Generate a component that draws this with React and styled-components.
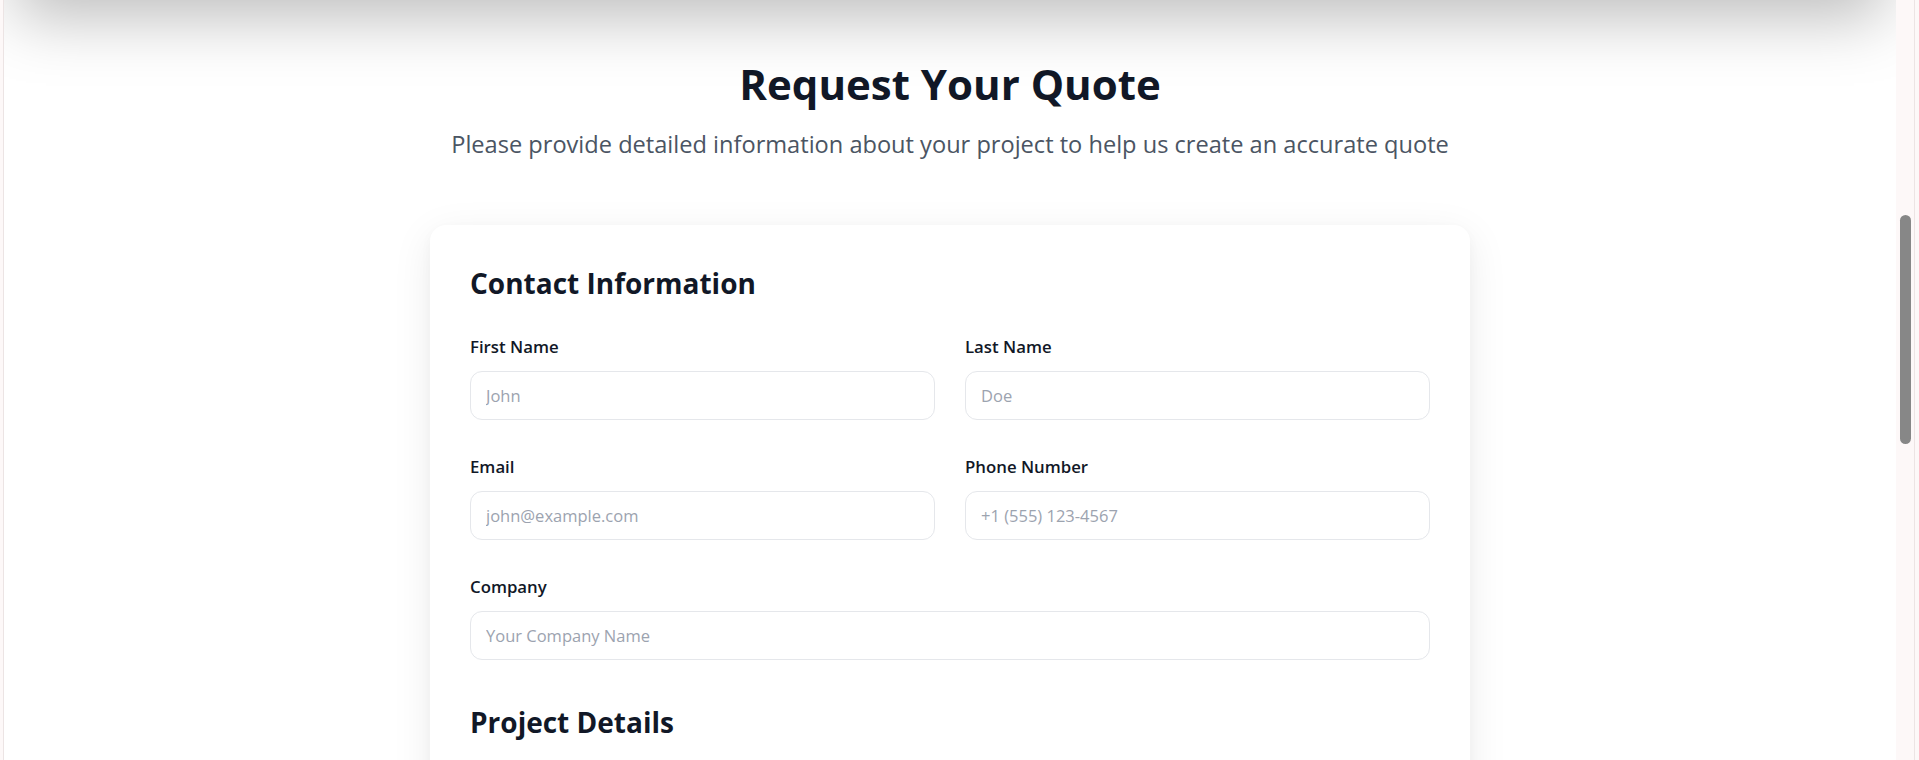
import React, { useLayoutEffect, useRef, useState } from 'react';
import styled, { createGlobalStyle } from 'styled-components';
import { FiChevronDown } from 'react-icons/fi';

const GlobalStyle = createGlobalStyle`
  html, body {
    margin: 0;
    padding: 0;
    background: #fdf8f8;
    font-family: "Open Sans", "Noto Sans", Arial, sans-serif;
    overflow: hidden;
  }
  * { box-sizing: border-box; }
`;

// Preview frame: scrolling viewport plus its scrollbar column
const Frame = styled.div`
  display: flex;
  height: 760px;
  margin: 0 4px 0 3px;
  border-left: 1px solid #ece4e4;
  border-right: 1px solid #ece4e4;
`;

const Viewport = styled.div`
  flex: 1;
  min-width: 0;
  background: #ffffff;
  overflow-y: scroll;
  scrollbar-width: none;

  &::-webkit-scrollbar {
    display: none;
  }
`;

const Track = styled.div`
  width: 18px;
  flex-shrink: 0;
  background: #fdf8f8;
`;

const Thumb = styled.div`
  width: 11px;
  margin-left: 4px;
  border-radius: 6px;
  background: #878787;
`;

// Hero sits above the form, scrolled out of view
const Hero = styled.section`
  position: relative;
  z-index: 1;
  height: 717px;
  display: flex;
  flex-direction: column;
  align-items: center;
  justify-content: center;
  gap: 20px;
  background: linear-gradient(135deg, #1e3a8a 0%, #2563eb 100%);
  color: #fff;
  box-shadow: 0 30px 60px -12px rgba(0, 0, 0, 0.26);
`;

const HeroTitle = styled.h1`
  margin: 0;
  font-size: 56px;
  font-weight: 800;
`;

const HeroText = styled.p`
  margin: 0;
  font-size: 20px;
  color: #dbeafe;
`;

const QuoteSection = styled.section`
  padding: 60px 0 112px;
`;

const Intro = styled.header`
  text-align: center;
  margin-bottom: 65px;
`;

const Title = styled.h2`
  margin: 0;
  font-size: 42px;
  line-height: 48px;
  font-weight: 700;
  color: #111827;
`;

const Subtitle = styled.p`
  margin: 20px 0 0;
  font-size: 23.6px;
  line-height: 32px;
  color: #4b5563;
`;

const Card = styled.form`
  width: 1040px;
  margin: 0 auto;
  padding: 40px;
  background: #ffffff;
  border-radius: 16px;
  box-shadow: 0 10px 40px rgba(0, 0, 0, 0.08), 0 4px 12px rgba(0, 0, 0, 0.03);
`;

const Block = styled.div`
  & + & {
    margin-top: 44px;
  }
`;

const BlockTitle = styled.h3`
  margin: 0 0 34px;
  font-size: 28px;
  line-height: 36px;
  font-weight: 700;
  color: #111827;
`;

const Grid = styled.div`
  display: grid;
  grid-template-columns: 1fr 1fr;
  column-gap: 30px;
  row-gap: 35px;
`;

const Field = styled.div`
  display: flex;
  flex-direction: column;
  grid-column: ${({ $wide }) => ($wide ? '1 / -1' : 'auto')};
`;

const Label = styled.label`
  font-size: 16.8px;
  line-height: 24px;
  font-weight: 600;
  color: #111827;
  margin-bottom: 12px;
`;

const Input = styled.input`
  height: 49px;
  padding: 0 15px;
  border: 1px solid #e5e7eb;
  border-radius: 12px;
  background: #fff;
  font-family: inherit;
  font-size: 16.5px;
  color: #111827;
  outline: none;

  &::placeholder {
    color: #9ca3af;
  }
`;

const SelectWrap = styled.div`
  position: relative;
  display: flex;

  svg {
    position: absolute;
    right: 16px;
    top: 16px;
    color: #6b7280;
    pointer-events: none;
  }
`;

const Select = styled.select`
  flex: 1;
  height: 49px;
  padding: 0 15px;
  border: 1px solid #e5e7eb;
  border-radius: 12px;
  background: #fff;
  font-family: inherit;
  font-size: 16.5px;
  color: #9ca3af;
  appearance: none;
`;

const TextArea = styled.textarea`
  height: ${({ $rows }) => $rows * 24 + 26}px;
  padding: 12px 15px;
  border: 1px solid #e5e7eb;
  border-radius: 12px;
  font-family: inherit;
  font-size: 16.5px;
  line-height: 24px;
  resize: vertical;

  &::placeholder {
    color: #9ca3af;
  }
`;

const SubmitRow = styled.div`
  display: flex;
  justify-content: flex-end;
  margin-top: 40px;
`;

const SubmitButton = styled.button`
  height: 56px;
  padding: 0 32px;
  border: none;
  border-radius: 12px;
  background: #2563eb;
  color: #fff;
  font-family: inherit;
  font-size: 17px;
  font-weight: 600;
`;

function TextField({ label, placeholder, type = 'text', wide }) {
  return (
    <Field $wide={wide}>
      <Label>{label}</Label>
      <Input type={type} placeholder={placeholder} />
    </Field>
  );
}

function SelectField({ label, options, wide }) {
  return (
    <Field $wide={wide}>
      <Label>{label}</Label>
      <SelectWrap>
        <Select defaultValue="">
          {options.map((o, i) => (
            <option key={o} value={i === 0 ? '' : o}>{o}</option>
          ))}
        </Select>
        <FiChevronDown size={18} />
      </SelectWrap>
    </Field>
  );
}

export default function App() {
  const viewRef = useRef(null);
  const heroRef = useRef(null);
  const [thumb, setThumb] = useState({ top: 0, height: 0 });

  const syncThumb = () => {
    const v = viewRef.current;
    if (!v) return;
    const h = v.clientHeight;
    const size = (h * h) / v.scrollHeight;
    const range = v.scrollHeight - h;
    const top = range > 0 ? (v.scrollTop / range) * (h - size) : 0;
    setThumb({ top, height: size });
  };

  // open the page scrolled to the form, just below the hero
  useLayoutEffect(() => {
    if (viewRef.current && heroRef.current) {
      viewRef.current.scrollTop = heroRef.current.offsetHeight;
    }
    syncThumb();
  }, []);

  return (
    <>
      <GlobalStyle />
      <Frame>
        <Viewport ref={viewRef} onScroll={syncThumb}>
          <Hero ref={heroRef}>
            <HeroTitle>Get a Custom Quote</HeroTitle>
            <HeroText>Tell us about your project and we'll get back to you within 24 hours</HeroText>
          </Hero>

          <QuoteSection>
            <Intro>
              <Title>Request Your Quote</Title>
              <Subtitle>
                Please provide detailed information about your project to help us create an accurate quote
              </Subtitle>
            </Intro>

            <Card onSubmit={(e) => e.preventDefault()}>
              <Block>
                <BlockTitle>Contact Information</BlockTitle>
                <Grid>
                  <TextField label="First Name" placeholder="John" />
                  <TextField label="Last Name" placeholder="Doe" />
                  <TextField label="Email" type="email" placeholder="john@example.com" />
                  <TextField label="Phone Number" type="tel" placeholder="+1 (555) 123-4567" />
                  <TextField label="Company" placeholder="Your Company Name" wide />
                </Grid>
              </Block>

              <Block>
                <BlockTitle>Project Details</BlockTitle>
                <Grid>
                  <SelectField
                    label="Project Type"
                    options={['Select project type', 'Website', 'Mobile App', 'E-commerce', 'Branding']}
                  />
                  <SelectField
                    label="Budget Range"
                    options={['Select budget range', '$5k - $10k', '$10k - $25k', '$25k - $50k', '$50k+']}
                  />
                  <SelectField
                    label="Timeline"
                    options={['Select timeline', '1-2 months', '3-4 months', '5-6 months', 'Flexible']}
                  />
                  <TextField label="Desired Start Date" placeholder="mm/dd/yyyy" />
                  <Field $wide>
                    <Label>Project Description</Label>
                    <TextArea $rows={5} placeholder="Describe your project goals, features and any specific requirements" />
                  </Field>
                </Grid>
              </Block>

              <Block>
                <BlockTitle>Additional Information</BlockTitle>
                <Grid>
                  <SelectField
                    label="How did you hear about us?"
                    options={['Select an option', 'Search engine', 'Referral', 'Social media', 'Other']}
                  />
                  <SelectField
                    label="Preferred Contact Method"
                    options={['Select a method', 'Email', 'Phone', 'Video call']}
                  />
                  <Field $wide>
                    <Label>Additional Notes</Label>
                    <TextArea $rows={3} placeholder="Anything else we should know?" />
                  </Field>
                </Grid>
              </Block>

              <SubmitRow>
                <SubmitButton type="submit">Submit Quote Request</SubmitButton>
              </SubmitRow>
            </Card>
          </QuoteSection>
        </Viewport>
        <Track>
          <Thumb style={{ marginTop: thumb.top, height: thumb.height }} />
        </Track>
      </Frame>
    </>
  );
}
